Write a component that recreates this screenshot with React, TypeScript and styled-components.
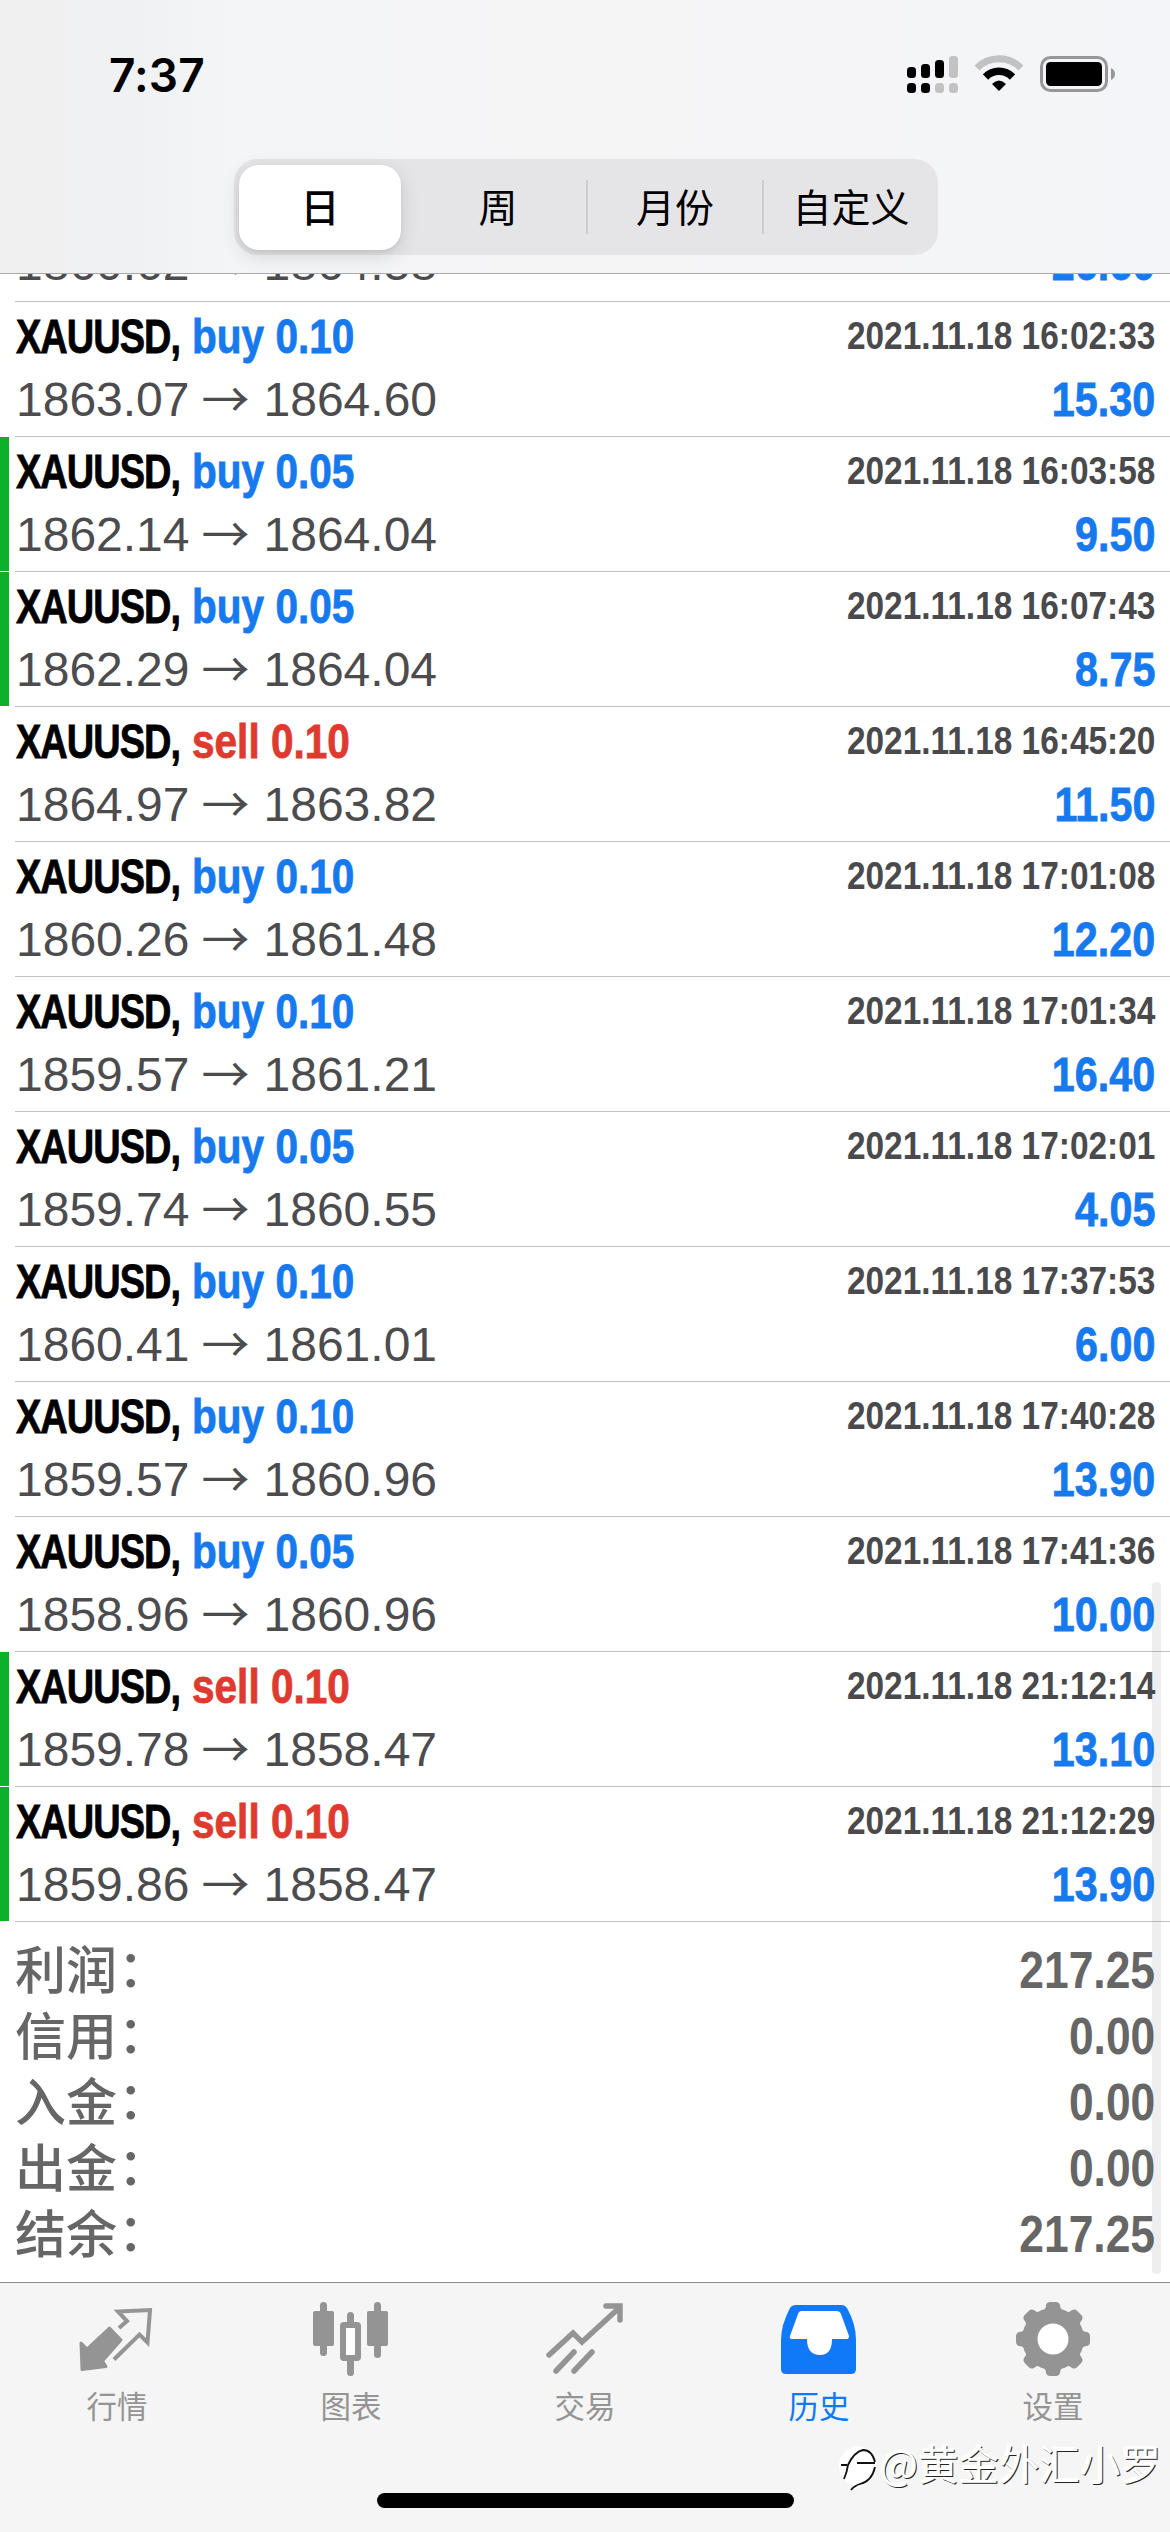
import React from 'react';
import styled, { createGlobalStyle } from 'styled-components';

const latin = `"Liberation Sans", Arial, "Noto Sans CJK SC", sans-serif`;
const cjk = `"Noto Sans CJK SC", sans-serif`;

const GlobalStyle = createGlobalStyle`
  * { box-sizing: border-box; }
  body { margin: 0; background: #fff; font-family: ${latin}; }
`;

const Screen = styled.main`
  position: relative;
  width: 1170px;
  height: 2532px;
  display: flex;
  flex-direction: column;
  overflow: hidden;
  background: #fff;
`;

const Header = styled.header`
  flex: none;
  height: 274px;
  border-bottom: 1px solid #a9a9ab;
  background: linear-gradient(90deg, #f0f0f0 0%, #f0f1f3 11%, #f4f5f7 20%, #f5f5f6 50%, #f4f5f8 100%);
`;

const StatusBar = styled.div`
  height: 159px;
  padding: 50px 53px 0 109px;
  display: flex;
  justify-content: space-between;
  align-items: flex-start;
`;

const Clock = styled.time`
  font: 600 46px/50px Inter, sans-serif;
  letter-spacing: 0.1px;
  color: #000;
`;

const StatusIcons = styled.svg`
  display: block;
  width: 212px;
  height: 50px;
`;

const Segments = styled.nav`
  width: 704px;
  height: 96px;
  margin: 0 auto 0 234px;
  padding: 5px 0;
  border-radius: 24px;
  background: #e5e5e7;
  display: grid;
  grid-template-columns: repeat(4, 1fr);
  align-items: center;
`;

const Segment = styled.button<{ $active?: boolean; $divided?: boolean }>`
  height: ${p => (p.$active ? 85 : 54)}px;
  margin: ${p => (p.$active ? '0 9px 0 5px' : '0')};
  padding: 0 0 5px;
  border: 0;
  border-left: ${p => (p.$divided ? '2px solid #cdcdd1' : '0')};
  border-radius: ${p => (p.$active ? 20 : 0)}px;
  background: ${p => (p.$active ? '#fff' : 'transparent')};
  box-shadow: ${p => (p.$active ? '0 6px 20px rgba(0,0,0,.13), 0 2px 4px rgba(0,0,0,.06)' : 'none')};
  font: ${p => (p.$active ? 500 : 400)} 39px/50px ${cjk};
  color: #000;
  white-space: nowrap;
`;

const History = styled.section`
  flex: 1;
  min-height: 0;
  overflow: hidden;
`;

const Row = styled.article<{ $clipped?: boolean }>`
  height: 135px;
  margin-top: ${p => (p.$clipped ? -107 : 0)}px;
  display: flex;
  gap: 6px;
`;

const Marker = styled.i<{ $on?: boolean }>`
  width: 9px;
  margin-bottom: 1px;
  background: ${p => (p.$on ? '#0cb02b' : 'transparent')};
`;

const RowBody = styled.div`
  flex: 1;
  border-bottom: 1px solid #c2c2c4;
  padding: 9px 15px 0 1px;
  display: flex;
  flex-direction: column;
`;

const Line = styled.div<{ $h: number }>`
  height: ${p => p.$h}px;
  line-height: ${p => p.$h}px;
  display: flex;
  justify-content: space-between;
  white-space: nowrap;
`;

const Deal = styled.div`
  display: flex;
  font-size: 48px;
  font-weight: 700;
`;

const Symbol = styled.span`
  width: 176px;
  color: #000;
  letter-spacing: -1.2px;
  -webkit-text-stroke: 0.8px currentColor;
  transform: scaleX(0.79);
  transform-origin: left;
`;

const Side = styled.span<{ $sell: boolean }>`
  color: ${p => (p.$sell ? '#de3a2f' : '#1679ee')};
  -webkit-text-stroke: 0.8px currentColor;
  transform: scaleX(0.845);
  transform-origin: left;
`;

const Stamp = styled.time`
  font-size: 38.5px;
  font-weight: 700;
  color: #4a4a4d;
  transform: translateY(-1px) scaleX(0.868);
  transform-origin: right;
`;

const Prices = styled.div`
  display: flex;
  font-size: 48px;
  color: #4c4c4f;
`;

const Arrow = styled.span`
  width: 48px;
  margin: 0 14px 0 12px;
  font-family: ${cjk};
  font-weight: 400;
  transform: translateY(-4px);
`;

const Profit = styled.span`
  font-size: 48px;
  font-weight: 700;
  color: #1679ee;
  -webkit-text-stroke: 0.8px currentColor;
  transform: scaleX(0.86);
  transform-origin: right;
`;

const Summary = styled.dl`
  margin: 0;
  padding: 16px 15px 0 15px;
`;

const Total = styled.div`
  height: 66px;
  display: flex;
  justify-content: space-between;
  line-height: 66px;
  color: #666;
`;

const Label = styled.dt`
  font: 500 51px/58px ${cjk};
`;

const Colon = styled.span`
  display: inline-block;
  transform: translate(1px, -2px);
`;

const Amount = styled.dd`
  margin: 0;
  font-size: 51px;
  font-weight: 700;
  transform: scaleX(0.87);
  transform-origin: right;
`;

const ScrollThumb = styled.div`
  position: absolute;
  left: 1152px;
  top: 1582px;
  width: 9px;
  height: 692px;
  border-radius: 4px;
  background: rgba(0, 0, 0, 0.065);
`;

const TabBar = styled.nav`
  flex: none;
  height: 250px;
  border-top: 1px solid #8f8f91;
  background: #f5f5f5;
  display: flex;
  flex-direction: column;
  align-items: center;
`;

const Tabs = styled.div`
  width: 100%;
  height: 210px;
  display: grid;
  grid-template-columns: repeat(5, 1fr);
`;

const Tab = styled.button<{ $active?: boolean }>`
  border: 0;
  padding: 14px 0 0;
  background: none;
  display: flex;
  flex-direction: column;
  align-items: center;
  color: ${p => (p.$active ? '#1079f8' : '#949494')};
  font: 400 30.5px/40px ${cjk};
`;

const TabIcon = styled.svg`
  display: block;
  width: 90px;
  height: 88px;
`;

const HomeIndicator = styled.div`
  width: 417px;
  height: 15px;
  border-radius: 8px;
  background: #000;
`;

const Watermark = styled.div`
  position: absolute;
  right: 9px;
  top: 2435px;
  height: 56px;
  display: flex;
  align-items: center;
  gap: 2px;
  font: 400 40.5px/56px ${cjk};
  color: #fff;
  text-shadow: 1px 1px 0 #222, -1px -1px 1px #fff;
`;

type Deal = [side: string, open: string, close: string, time: string, profit: string, marked?: boolean];

const deals: Deal[] = [
  ['buy 0.10', '1863.07', '1864.60', '16:02:33', '15.30'],
  ['buy 0.05', '1862.14', '1864.04', '16:03:58', '9.50', true],
  ['buy 0.05', '1862.29', '1864.04', '16:07:43', '8.75', true],
  ['sell 0.10', '1864.97', '1863.82', '16:45:20', '11.50'],
  ['buy 0.10', '1860.26', '1861.48', '17:01:08', '12.20'],
  ['buy 0.10', '1859.57', '1861.21', '17:01:34', '16.40'],
  ['buy 0.05', '1859.74', '1860.55', '17:02:01', '4.05'],
  ['buy 0.10', '1860.41', '1861.01', '17:37:53', '6.00'],
  ['buy 0.10', '1859.57', '1860.96', '17:40:28', '13.90'],
  ['buy 0.05', '1858.96', '1860.96', '17:41:36', '10.00'],
  ['sell 0.10', '1859.78', '1858.47', '21:12:14', '13.10', true],
  ['sell 0.10', '1859.86', '1858.47', '21:12:29', '13.90', true],
];

const totals = [
  ['利润', '217.25'],
  ['信用', '0.00'],
  ['入金', '0.00'],
  ['出金', '0.00'],
  ['结余', '217.25'],
];

const PriceLine = ({ open, close, profit }: { open: string; close: string; profit: string }) => (
  <Line $h={74}>
    <Prices>
      <span>{open}</span>
      <Arrow>→</Arrow>
      <span>{close}</span>
    </Prices>
    <Profit>{profit}</Profit>
  </Line>
);

const gear = Array.from({ length: 8 }, (_, i) => i * 45);

export default function App() {
  return (
    <Screen>
      <GlobalStyle />
      <Header>
        <StatusBar>
          <Clock>7:37</Clock>
          <StatusIcons viewBox="905 50 212 50">
            <g fill="#000">
              <rect x="907" y="67" width="9" height="11" rx="3.5" />
              <rect x="921" y="64" width="9" height="14" rx="3.5" />
              <rect x="935" y="60" width="9" height="18" rx="3.5" />
              <rect x="907" y="83" width="9" height="10" rx="3.5" />
              <rect x="921" y="83" width="9" height="10" rx="3.5" />
            </g>
            <g fill="#c2c2c3">
              <rect x="949" y="56" width="9" height="22" rx="3.5" />
              <rect x="935" y="83" width="9" height="10" rx="3.5" />
              <rect x="949" y="83" width="9" height="10" rx="3.5" />
            </g>
            <path d="M977 68a31 31 0 0 1 44 0" fill="none" stroke="#c2c2c3" strokeWidth="7" />
            <path d="M985.500 77a19 19 0 0 1 27 0" fill="none" stroke="#000" strokeWidth="7.500" />
            <path d="M992 84q7-7 14 0L999 91z" fill="#000" />
            <rect x="1041.500" y="57.500" width="65" height="33" rx="9" fill="none" stroke="#97979a" strokeWidth="3" />
            <rect x="1046" y="62" width="56" height="24" rx="4.500" fill="#000" />
            <path d="M1111 68q4 2 4 6t-4 6z" fill="#97979a" />
          </StatusIcons>
        </StatusBar>
        <Segments>
          <Segment $active>日</Segment>
          <Segment>周</Segment>
          <Segment $divided>月份</Segment>
          <Segment $divided>自定义</Segment>
        </Segments>
      </Header>

      <History>
        <Row $clipped>
          <Marker />
          <RowBody>
            <Line $h={52} />
            <PriceLine open="1860.62" close="1864.58" profit="26.60" />
          </RowBody>
        </Row>
        {deals.map(([side, open, close, time, profit, marked]) => (
          <Row key={time}>
            <Marker $on={marked} />
            <RowBody>
              <Line $h={52}>
                <Deal>
                  <Symbol>XAUUSD,</Symbol>
                  <Side $sell={side.startsWith('sell')}>{side}</Side>
                </Deal>
                <Stamp>2021.11.18 {time}</Stamp>
              </Line>
              <PriceLine open={open} close={close} profit={profit} />
            </RowBody>
          </Row>
        ))}
        <Summary>
          {totals.map(([name, value]) => (
            <Total key={name}>
              <Label>
                {name}
                <Colon>：</Colon>
              </Label>
              <Amount>{value}</Amount>
            </Total>
          ))}
        </Summary>
      </History>

      <TabBar>
        <Tabs>
          <Tab>
            <TabIcon viewBox="72 2297 90 88">
              <path d="M109.500 2328L121 2340 102.500 2361 106 2366.500 82 2369.500 81 2343 87 2349z" fill="#949494" stroke="#949494" strokeWidth="3" strokeLinejoin="round" />
              <path d="M119 2328l8-7-9-9.500 32-1.500-2.500 32.500-8-8-25.500 25" fill="none" stroke="#949494" strokeWidth="4" />
            </TabIcon>
            行情
          </Tab>
          <Tab>
            <TabIcon viewBox="306 2297 90 88">
              <g fill="#949494">
                <rect x="313" y="2311" width="21" height="35" rx="2" />
                <rect x="367" y="2311" width="21" height="35" rx="2" />
                <rect x="320" y="2302" width="7" height="54" rx="3.500" />
                <rect x="374" y="2302" width="7" height="56" rx="3.500" />
                <rect x="347" y="2312" width="7" height="14" rx="3.500" />
                <rect x="347" y="2355" width="7" height="21" rx="3.500" />
              </g>
              <rect x="343" y="2325" width="15" height="33" rx="1" fill="#fff" stroke="#949494" strokeWidth="6" />
            </TabIcon>
            图表
          </Tab>
          <Tab>
            <TabIcon viewBox="540 2297 90 88">
              <path d="M549 2355l24-22 9 9 37-34M606 2306h14v14M556 2371l18-19M574 2371l18-19" fill="none" stroke="#949494" strokeWidth="5.500" strokeLinecap="round" />
            </TabIcon>
            交易
          </Tab>
          <Tab $active>
            <TabIcon viewBox="774 2297 90 88">
              <path fill="#1079f8" d="M796 2305h46q3 0 5 3 9 16 9 32v29q0 5-5 5h-65q-5 0-5-5v-29q0-15 9-32 2-3 6-3z" />
              <path fill="#fff" d="M799 2311h37q4 0 5 3l8 22q0 3-2 3h-15q0 16-12 16-13 0-13-16h-15q-3 0-2-3l8-22q1-3 3-3z" />
            </TabIcon>
            历史
          </Tab>
          <Tab>
            <TabIcon viewBox="1008 2297 90 88">
              <g fill="#949494">
                <circle cx="1053" cy="2339" r="31" />
                {gear.map(a => (
                  <path key={a} transform={`rotate(${a} 1053 2339)`} d="M1042 2312q4-3 4-7 1-3 4-3h6q3 0 4 3 0 4 4 7z" />
                ))}
              </g>
              <circle cx="1053" cy="2339" r="15.500" fill="#fff" />
            </TabIcon>
            设置
          </Tab>
        </Tabs>
        <HomeIndicator />
      </TabBar>
      <ScrollThumb />
      <Watermark>
        <svg width="42" height="56" viewBox="832 2435 42 56">
          <path d="M853 2446a20 20 0 0 1 8 38q-6 4-15 7l3-6a20 20 0 0 1 4-39z" fill="#fff" />
          <path d="M837 2465h6M840 2479q3-7 4-14 6-13 15-15 9 0 12 12M853 2463h18M871 2467q-3 14-15 17-6 2-9 6" fill="none" stroke="#111" strokeWidth="1.800" />
        </svg>
        @黄金外汇小罗
      </Watermark>
    </Screen>
  );
}
